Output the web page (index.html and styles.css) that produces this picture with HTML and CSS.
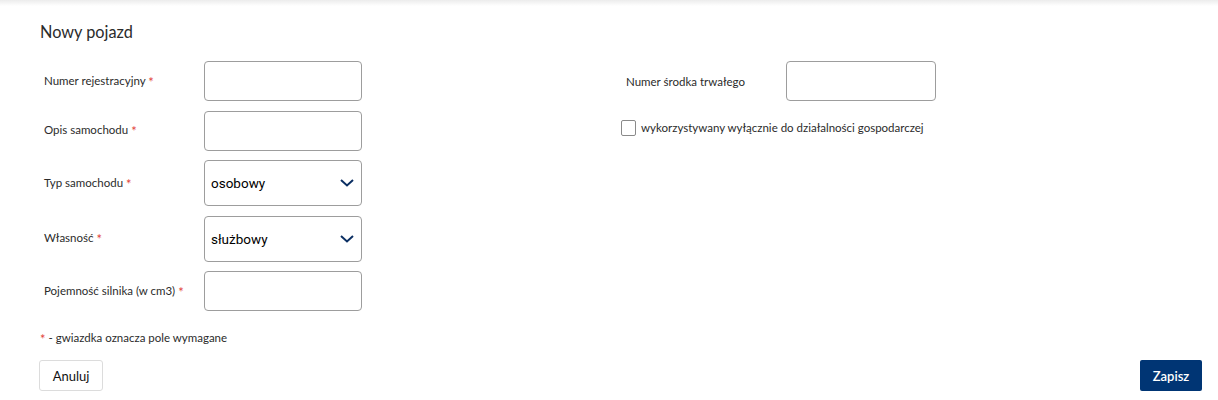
FILE: index.html
```html
<!DOCTYPE html>
<html lang="pl">
<head>
<meta charset="utf-8">
<title>Nowy pojazd</title>
<link rel="stylesheet" href="styles.css">
</head>
<body>
<div class="topshade"></div>
<main class="page">
  <h1 class="title">Nowy pojazd</h1>
  <div class="form">
    <div class="col col-left">
      <div class="row">
        <label class="lbl">Numer rejestracyjny <span class="req">*</span></label>
        <div class="field"></div>
      </div>
      <div class="row">
        <label class="lbl">Opis samochodu <span class="req">*</span></label>
        <div class="field"></div>
      </div>
      <div class="row">
        <label class="lbl">Typ samochodu <span class="req">*</span></label>
        <div class="field select"><span class="val">osobowy</span>
          <svg class="chev" width="14" height="8" viewBox="0 0 14 8"><path d="M1 1l6 5.5L13 1" fill="none" stroke="#0b2f63" stroke-width="2"/></svg>
        </div>
      </div>
      <div class="row">
        <label class="lbl">Własność <span class="req">*</span></label>
        <div class="field select"><span class="val">służbowy</span>
          <svg class="chev" width="14" height="8" viewBox="0 0 14 8"><path d="M1 1l6 5.5L13 1" fill="none" stroke="#0b2f63" stroke-width="2"/></svg>
        </div>
      </div>
      <div class="row">
        <label class="lbl">Pojemność silnika (w cm3) <span class="req">*</span></label>
        <div class="field"></div>
      </div>
    </div>
    <div class="col col-right">
      <div class="row">
        <label class="lbl lbl-right">Numer środka trwałego</label>
        <div class="field field-right"></div>
      </div>
      <div class="check-row">
        <span class="box"></span>
        <span class="check-text">wykorzystywany wyłącznie do działalności gospodarczej</span>
      </div>
    </div>
  </div>
  <p class="note"><span class="req">*</span> - gwiazdka oznacza pole wymagane</p>
  <div class="actions">
    <button class="btn btn-cancel">Anuluj</button>
    <button class="btn btn-save">Zapisz</button>
  </div>
</main>
</body>
</html>
```
FILE: styles.css
```css
html, body {
  margin: 0;
  background: #fff;
}
body {
  font-family: Lato, "Open Sans", sans-serif;
  color: #2b2b2b;
}
.topshade {
  height: 6px;
  background: linear-gradient(#ececec, #ffffff);
}
.page {
  padding: 0 16px 0 40px;
}
.title {
  margin: 16px 0 0;
  font-size: 16.3px;
  line-height: 20px;
  font-weight: 400;
  color: #2b2b2b;
}
.form {
  display: grid;
  grid-template-columns: 1fr 1fr;
  margin-top: 19px;
}
.col {
  display: flex;
  flex-direction: column;
  gap: 9.5px;
}
.row {
  display: flex;
  align-items: center;
}
.lbl {
  box-sizing: border-box;
  width: 164px;
  padding-left: 4px;
  font-size: 11.5px;
  color: #2b2b2b;
}
.lbl-right {
  width: 165px;
  padding-left: 5px;
}
.req {
  color: #e2453c;
  font-size: 13px;
  line-height: 1;
  vertical-align: -2px;
}
.field {
  box-sizing: border-box;
  width: 158px;
  height: 40px;
  border: 1px solid #9d9d9d;
  border-radius: 4px;
  background: #fff;
}
.field-right {
  width: 150px;
}
.select {
  height: 46px;
  display: flex;
  align-items: center;
  justify-content: space-between;
  padding: 0 7px 0 6px;
}
.val {
  font-family: Roboto, "Liberation Sans", sans-serif;
  font-size: 13.5px;
  font-weight: 400;
  color: #000;
}
.chev {
  display: block;
}
.check-row {
  display: flex;
  align-items: center;
  gap: 5px;
  margin-top: 9px;
}
.box {
  box-sizing: border-box;
  width: 15px;
  height: 16px;
  border: 1px solid #8a8a8a;
  border-radius: 2px;
}
.check-text {
  font-size: 11.5px;
  color: #2b2b2b;
}
.note {
  margin: 19px 0 0;
  font-size: 11.5px;
  line-height: 16px;
}
.actions {
  display: flex;
  justify-content: space-between;
  margin-top: 14px;
}
.btn {
  font-family: Lato, "Open Sans", sans-serif;
  font-size: 13px;
  height: 31px;
  border-radius: 3px;
  cursor: pointer;
}
.btn-cancel {
  margin-left: -1px;
  width: 64px;
  background: #fff;
  border: 1px solid #dcdcdc;
  color: #111;
}
.btn-save {
  width: 62px;
  background: #003574;
  border: none;
  color: #fff;
  font-weight: 600;
  border-radius: 2px;
}
```
